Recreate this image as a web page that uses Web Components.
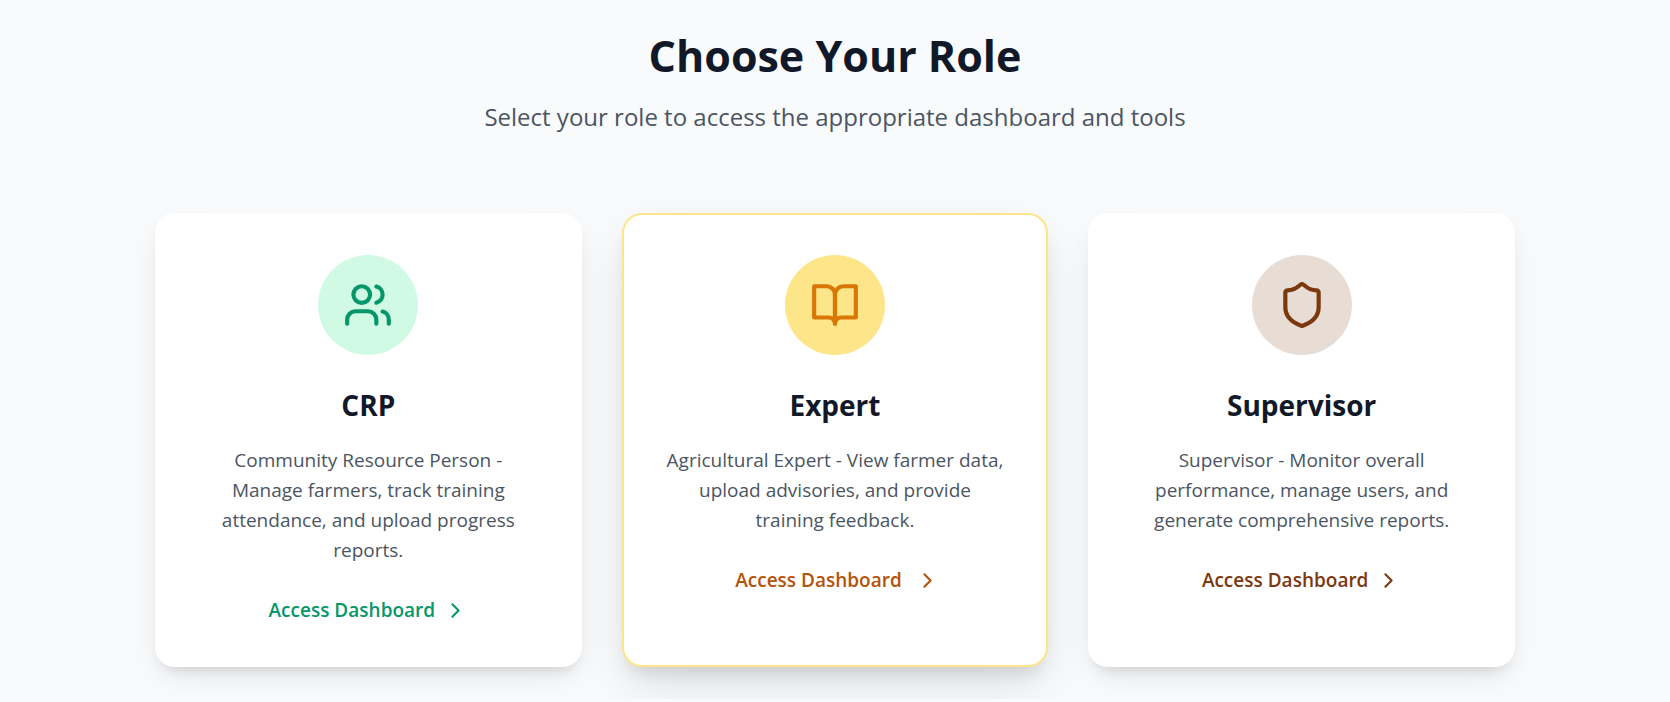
<!DOCTYPE html>
<html lang="en">
<head>
<meta charset="utf-8">
<meta name="viewport" content="width=device-width, initial-scale=1">
<title>Choose Your Role</title>
<style>
  body { margin: 0; background: #f9fafc; font-family: "Segoe UI", "Open Sans", sans-serif; color: #111827; }
</style>
</head>
<body>
<role-picker>
  <span slot="title">Choose Your Role</span>
  <span slot="subtitle">Select your role to access the appropriate dashboard and tools</span>
  <role-card icon="users" tone="green" href="#crp">
    <span slot="name">CRP</span>
    Community Resource Person - Manage farmers, track training attendance, and upload progress reports.
  </role-card>
  <role-card icon="book" tone="amber" href="#expert" active>
    <span slot="name">Expert</span>
    Agricultural Expert - View farmer data, upload advisories, and provide training feedback.
  </role-card>
  <role-card icon="shield" tone="brown" href="#supervisor">
    <span slot="name">Supervisor</span>
    Supervisor - Monitor overall performance, manage users, and generate comprehensive reports.
  </role-card>
</role-picker>

<template id="picker-template">
  <style>
    :host { display: block; padding: 31px 40px 32px; }
    .inner { max-width: 1360px; margin: 0 auto; }
    header { text-align: center; margin-bottom: 79px; }
    h1 { margin: 0 0 18px; font-size: 43px; line-height: 50px; font-weight: 700; }
    p { margin: 0; font-size: 24px; line-height: 35px; color: #4b5563; }
    .cards { display: grid; grid-template-columns: repeat(auto-fit, minmax(320px, 1fr)); gap: 40px; }
  </style>
  <section class="inner">
    <header>
      <h1><slot name="title"></slot></h1>
      <p><slot name="subtitle"></slot></p>
    </header>
    <div class="cards"><slot></slot></div>
  </section>
</template>

<template id="card-template">
  <style>
    :host {
      display: flex; flex-direction: column; align-items: center; box-sizing: border-box;
      padding: 40px; border: 2px solid transparent; border-radius: 20px;
      background: #fff; text-align: center;
      box-shadow: 0 12px 31px -6px rgb(0 0 0 / .1), 0 10px 12px -7px rgb(0 0 0 / .1);
    }
    :host([tone="green"]) { --disc: #d1fae5; --icon: #059669; --link: #059669; }
    :host([tone="amber"]) { --disc: #fde68a; --icon: #d97706; --link: #b45309; }
    :host([tone="brown"]) { --disc: #e7ddd4; --icon: #7c380d; --link: #7c380d; }
    :host([active]) {
      border-color: var(--disc);
      box-shadow: 0 20px 50px -6px rgb(0 0 0 / .12), 0 12px 15px -6px rgb(0 0 0 / .1);
    }
    .disc { display: grid; place-items: center; width: 100px; height: 100px; border-radius: 50%; background: var(--disc); color: var(--icon); }
    h2 { margin: 30px 0 20px; font-size: 28px; line-height: 40px; font-weight: 700; }
    p { margin: 0 0 30px; font-size: 19px; line-height: 30px; color: #4b5563; }
    a { display: flex; align-items: center; gap: 8px; font-size: 19px; line-height: 30px; font-weight: 600; color: var(--link); text-decoration: none; }
    :host([active]) a role-icon { transform: translateX(5px); }
  </style>
  <div class="disc"><role-icon size="50"></role-icon></div>
  <h2><slot name="name"></slot></h2>
  <p><slot></slot></p>
  <a>Access Dashboard<role-icon name="chevron" size="25"></role-icon></a>
</template>

<script>
  const ICONS = {
    users: '<path d="M16 21v-2a4 4 0 0 0-4-4H6a4 4 0 0 0-4 4v2"/><circle cx="9" cy="7" r="4"/><path d="M22 21v-2a4 4 0 0 0-3-3.87"/><path d="M16 3.13a4 4 0 0 1 0 7.75"/>',
    book: '<path d="M2 3h6a4 4 0 0 1 4 4v14a3 3 0 0 0-3-3H2z"/><path d="M22 3h-6a4 4 0 0 0-4 4v14a3 3 0 0 1 3-3h7z"/>',
    shield: '<path d="M20 13c0 5-3.5 7.5-7.66 8.95a1 1 0 0 1-.67-.01C7.5 20.5 4 18 4 13V6a1 1 0 0 1 1-1c2 0 4.5-1.2 6.24-2.72a1.17 1.17 0 0 1 1.52 0C14.51 3.81 17 5 19 5a1 1 0 0 1 1 1z"/>',
    chevron: '<path d="m9 18 6-6-6-6"/>'
  };

  class RoleIcon extends HTMLElement {
    static observedAttributes = ['name', 'size'];
    constructor() { super(); this.attachShadow({ mode: 'open' }); }
    connectedCallback() { this.draw(); }
    attributeChangedCallback() { this.draw(); }
    draw() {
      const size = this.getAttribute('size') || 24;
      this.shadowRoot.innerHTML = `<style>:host { display: block; } svg { display: block; }</style>
        <svg width="${size}" height="${size}" viewBox="0 0 24 24" fill="none" stroke="currentColor" stroke-width="2" stroke-linecap="round" stroke-linejoin="round" aria-hidden="true">${ICONS[this.getAttribute('name')] || ''}</svg>`;
    }
  }

  class RoleCard extends HTMLElement {
    connectedCallback() {
      if (this.shadowRoot) return;
      const root = this.attachShadow({ mode: 'open' });
      root.append(document.getElementById('card-template').content.cloneNode(true));
      root.querySelector('.disc role-icon').setAttribute('name', this.getAttribute('icon'));
      root.querySelector('a').href = this.getAttribute('href');
    }
  }

  class RolePicker extends HTMLElement {
    connectedCallback() {
      if (this.shadowRoot) return;
      this.attachShadow({ mode: 'open' }).append(document.getElementById('picker-template').content.cloneNode(true));
    }
  }

  customElements.define('role-icon', RoleIcon);
  customElements.define('role-card', RoleCard);
  customElements.define('role-picker', RolePicker);
</script>
</body>
</html>
